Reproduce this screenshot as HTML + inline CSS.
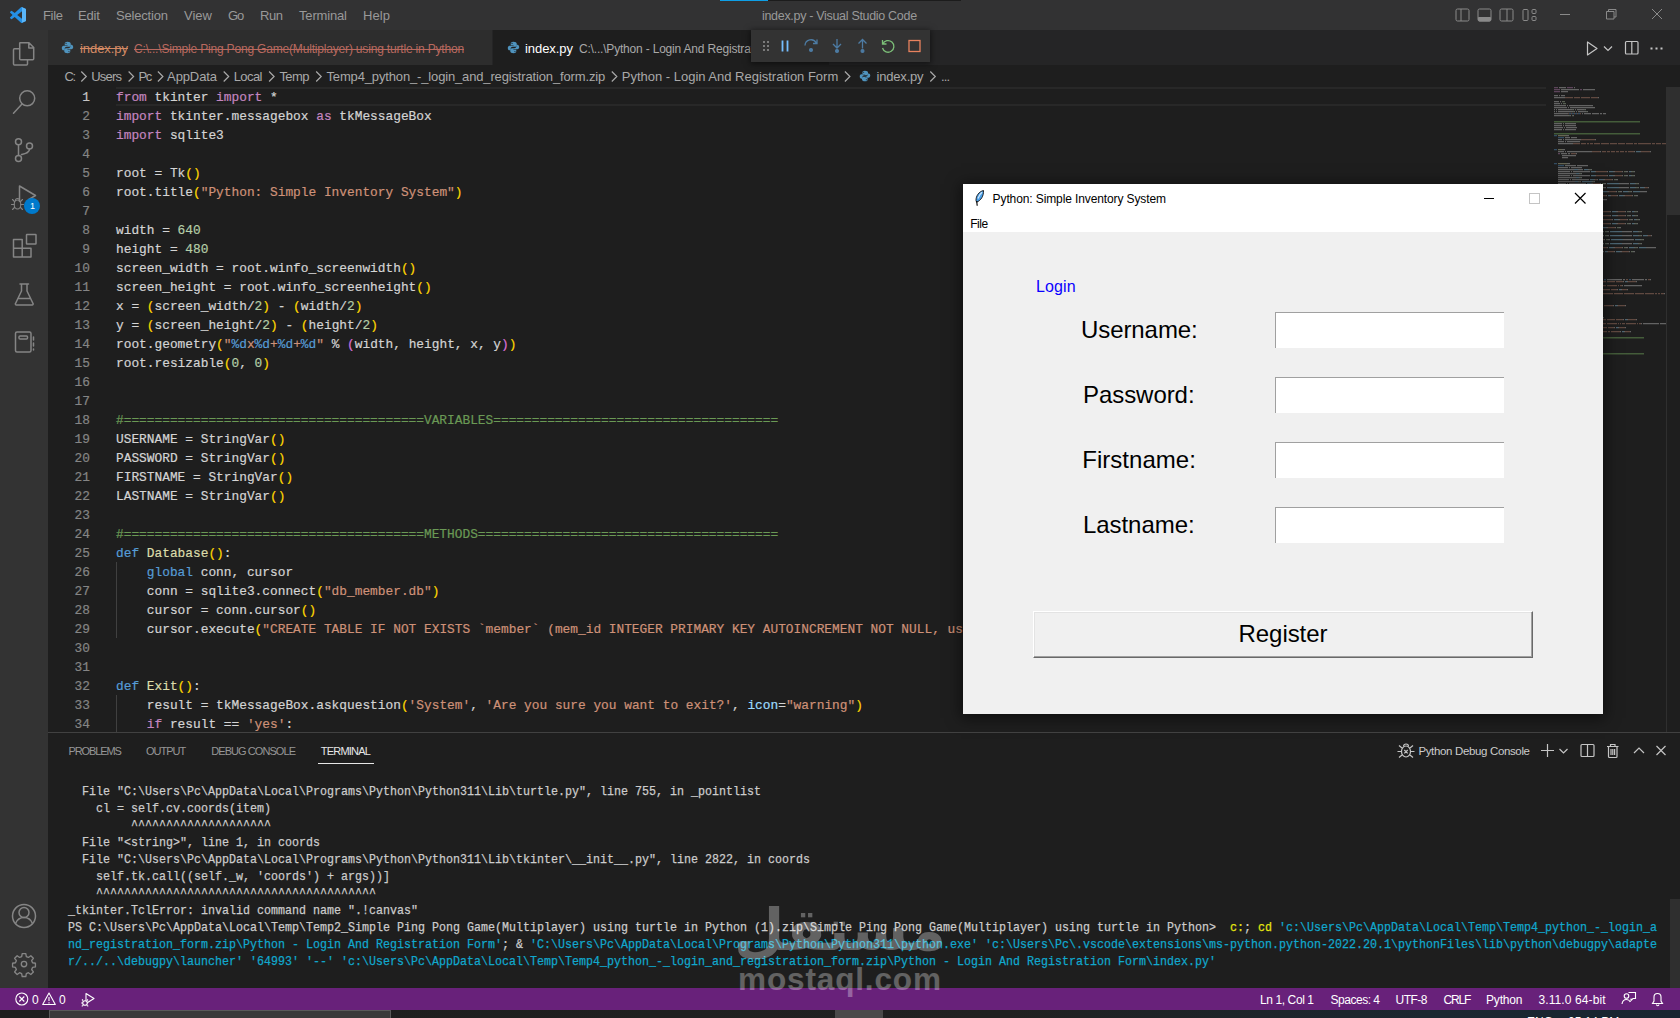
<!DOCTYPE html>
<html lang="en"><head><meta charset="utf-8"><title>index.py - Visual Studio Code</title>
<style>
html,body{margin:0;padding:0;background:#1e1e1e;overflow:hidden}
body{width:1680px;height:1018px;position:relative;font-family:"Liberation Sans",sans-serif;font-size:13px;color:#ccc}
.t,.m,.a{position:absolute}
.t,.m{white-space:pre}
.t{font-family:"Liberation Sans",sans-serif}
.m{font-family:"Liberation Mono",monospace}
i{font-style:normal}
svg{position:absolute;overflow:visible}
pre{margin:0;position:absolute;font-family:"Liberation Mono",monospace;white-space:pre;transform-origin:0 0}
.k{color:#c586c0}.b{color:#569cd6}.f{color:#dcdcaa}.s{color:#ce9178}.n{color:#b5cea8}.c{color:#6a9955}.p{color:#9cdcfe}
.y1{color:#ffd700}.y2{color:#da70d6}.y3{color:#179fff}
.cy{color:#11a8cd}.ye{color:#e5e510}
.st{text-decoration:line-through}
</style></head><body>
<div class="a" id="titlebar" style="left:0;top:0;width:1680px;height:30px;background:#323233"></div>
<div class="a" style="left:720px;top:0;width:241px;height:1px;background:#1c1c1c"><div class="a" style="left:0;top:0;width:48px;height:1px;background:#0e9fe6"></div></div>
<svg style="left:10px;top:7px" width="16" height="16" viewBox="0 0 100 100"><path d="M70.9 99.3a6.2 6.2 0 0 0 5-.2l20.6-9.9a6.25 6.25 0 0 0 3.5-5.6V16.4a6.25 6.25 0 0 0-3.5-5.6L75.9.9a6.2 6.2 0 0 0-7.1 1.2L29.4 38 12.2 25a4.2 4.2 0 0 0-5.3.2l-5.5 5a4.2 4.2 0 0 0 0 6.2L16.2 50 1.4 63.6a4.2 4.2 0 0 0 0 6.2l5.5 5a4.2 4.2 0 0 0 5.3.2l17.2-13 39.4 35.9a6.2 6.2 0 0 0 2.1 1.4zM75 27.3 45.1 50 75 72.7V27.3z" fill="#2490e6" fill-rule="evenodd"/><path d="M75.9.9 96.5 10.8a6.25 6.25 0 0 1 3.5 5.6v67.2a6.25 6.25 0 0 1-3.5 5.6l-20.6 9.9a6.2 6.2 0 0 1-5 .2c2.3.9 4.1-.8 4.1-3.3V4c0-2.500-2.300-4.200-4.600-3.300a6.200 6.200 0 0 1 5.500.2z" fill="#5ab5f8"/></svg>
<span class="t" style="left:43px;top:6.50px;font-size:13px;line-height:18px;color:#999;letter-spacing:-0.32px;">File</span>
<span class="t" style="left:78px;top:6.50px;font-size:13px;line-height:18px;color:#999;letter-spacing:-0.14px;">Edit</span>
<span class="t" style="left:116px;top:6.50px;font-size:13px;line-height:18px;color:#999;letter-spacing:-0.19px;">Selection</span>
<span class="t" style="left:184px;top:6.50px;font-size:13px;line-height:18px;color:#999;letter-spacing:0.02px;">View</span>
<span class="t" style="left:228px;top:6.50px;font-size:13px;line-height:18px;color:#999;letter-spacing:-1.20px;">Go</span>
<span class="t" style="left:260px;top:6.50px;font-size:13px;line-height:18px;color:#999;letter-spacing:-0.43px;">Run</span>
<span class="t" style="left:299px;top:6.50px;font-size:13px;line-height:18px;color:#999;letter-spacing:-0.16px;">Terminal</span>
<span class="t" style="left:363px;top:6.50px;font-size:13px;line-height:18px;color:#999;letter-spacing:0.08px;">Help</span>
<span class="t" style="left:762px;top:7.47px;font-size:12.5px;line-height:18px;color:#999;letter-spacing:-0.31px;">index.py - Visual Studio Code</span>
<svg style="left:1455px;top:8px" width="210" height="14" fill="none" stroke="#8a8a8a" stroke-width="1">
<rect x="1" y="1" width="13" height="12" rx="1.5"/><path d="M6 1v12"/>
<rect x="23" y="1" width="13" height="12" rx="1.5"/><path d="M23.500 9.500h12v2.500a1 1 0 0 1-1 1h-10a1 1 0 0 1-1-1z" fill="#8a8a8a"/>
<rect x="45" y="1" width="13" height="12" rx="1.5"/><path d="M52 1v12"/>
<rect x="68" y="1.500" width="5" height="11" rx="1"/><rect x="77" y="1.500" width="4" height="4" rx="1"/><rect x="77" y="8.500" width="4" height="4" rx="1"/>
<path d="M105 6.500h10"/>
<path d="M151.500 3.500h7.500v7.500h-7.500z M153.500 3.500v-2h7.500v7.500h-2"/>
<path d="M197 1l10 10M207 1l-10 10"/>
</svg>
<div class="a" id="activitybar" style="left:0;top:30px;width:48px;height:958px;background:#333333"></div>
<svg style="left:0;top:30px" width="48" height="340" fill="none" stroke="#858585" stroke-width="1.500" stroke-linejoin="round" stroke-linecap="round">
<path d="M19.800 12.800h9.200l4.700 4.700v11.200a1 1 0 0 1-1 1h-12a1 1 0 0 1-1-1v-15a1 1 0 0 1 .1-.9z M28.800 13v5h5"/>
<path d="M19.500 18.800h-5a1 1 0 0 0-1 1v14.200a1 1 0 0 0 1 1h12a1 1 0 0 0 1-1v-4.200"/>
<circle cx="27.200" cy="68.300" r="7.500"/><path d="M22 74l-8.500 9.200"/>
<circle cx="18.500" cy="111.700" r="3"/><circle cx="29.500" cy="116" r="3"/><circle cx="18.500" cy="128.400" r="3"/><path d="M18.500 114.700v10.700 M29.500 119c0 4-4 4.500-8 5.500"/>
<path d="M19.500 171.500v-15.500l16 9.500-7 4.200"/>
<g stroke-width="1.100"><ellipse cx="17.500" cy="174.500" rx="3.300" ry="4.500"/><path d="M14.500 171.500l-2-2M20.500 171.500l2-2M14.200 174.500h-2.700M20.800 174.500h2.700M14.500 177.500l-2 2M20.500 177.500l2 2M15.500 170.500a2 2 0 0 1 4 0"/></g>
<path d="M13.500 209.500h8.700v8.700h8.800v8.800h-17.500zM22.200 218.200v8.800M13.500 218.200h8.700"/><rect x="26.500" y="204.500" width="9.500" height="9.500" rx=".5"/>
<path d="M20 254h8.500M21.500 254v7l-6 12.500a1 1 0 0 0 1 1.500h15.500a1 1 0 0 0 1-1.500l-6-12.500v-7M18 268.500h12.500"/>
<rect x="15.500" y="302" width="15.500" height="20" rx="1.500"/><rect x="19" y="306" width="8.500" height="3" rx="1"/><path d="M33.500 307v3M33.500 313v3M33.500 319v1"/>
</svg>
<div class="a" style="left:24px;top:198px;width:16px;height:16px;border-radius:8px;background:#007acc"></div>
<span class="t" style="left:30px;top:200.38px;font-size:9px;line-height:13px;color:#fff;">1</span>
<svg style="left:0;top:892px" width="48" height="96" fill="none" stroke="#858585" stroke-width="1.500">
<circle cx="24" cy="24" r="11.500"/><circle cx="24" cy="20.500" r="5"/><path d="M15.500 31.500c2-5 5-6 8.500-6s6.500 1 8.500 6"/>
<g transform="translate(24 72) scale(.9) translate(-24 -72)"><circle cx="24" cy="72" r="3"/>
<path d="M22 60.500h4l.6 3.200 2.300 1 2.700-1.900 2.800 2.800-1.900 2.700 1 2.300 3.200.6v4l-3.200.6-1 2.300 1.900 2.700-2.800 2.800-2.700-1.900-2.300 1-.6 3.200h-4l-.6-3.200-2.300-1-2.700 1.900-2.800-2.800 1.900-2.700-1-2.300-3.200-.6v-4l3.200-.6 1-2.300-1.900-2.700 2.800-2.800 2.700 1.900 2.300-1z" stroke-linejoin="round"/></g>
</svg>
<div class="a" id="tabs" style="left:48px;top:30px;width:1632px;height:35px;background:#252526"></div>
<div class="a" style="left:48px;top:30px;width:444px;height:35px;background:#2d2d2d"></div>
<div class="a" style="left:493px;top:30px;width:336px;height:35px;background:#1e1e1e"></div>
<svg style="left:61px;top:41px" width="13" height="13" viewBox="0 0 16 16" fill="#4f93bd"><path d="M7.900 1C5 1 4.600 2.300 4.600 3.400v1.800h3.500v.6H3.200C1.800 5.800 1 7 1 8.600c0 1.700.8 2.900 2.200 2.900h1.300V9.600c0-1.400 1.200-2.500 2.500-2.500h3c1.100 0 2-.9 2-2V3.400C12 2 10.600 1 7.900 1zM6.200 2.300a.7.7 0 1 1 0 1.400.7.7 0 0 1 0-1.400z"/><path d="M8.100 15c2.900 0 3.300-1.300 3.300-2.400v-1.800H7.900v-.6h4.900c1.400 0 2.200-1.200 2.200-2.800 0-1.700-.8-2.900-2.200-2.900h-1.300v1.900c0 1.400-1.200 2.500-2.500 2.500h-3c-1.100 0-2 .9-2 2v1.700C4 14 5.400 15 8.100 15zm1.700-1.300a.7.7 0 1 1 0-1.400.7.7 0 0 1 0 1.400z"/></svg>
<span class="t" style="left:80px;top:39.50px;font-size:13px;line-height:18px;color:#d48a64;letter-spacing:-0.06px;text-decoration:line-through;">index.py</span>
<span class="t" style="left:134px;top:41.14px;font-size:12px;line-height:17px;color:#b9695f;letter-spacing:-0.18px;text-decoration:line-through;">C:\...\Simple Ping Pong Game(Multiplayer) using turtle in Python</span>
<svg style="left:507px;top:41px" width="13" height="13" viewBox="0 0 16 16" fill="#4f93bd"><path d="M7.900 1C5 1 4.600 2.300 4.600 3.400v1.800h3.500v.6H3.200C1.800 5.800 1 7 1 8.600c0 1.700.8 2.900 2.200 2.900h1.300V9.600c0-1.400 1.200-2.500 2.500-2.500h3c1.100 0 2-.9 2-2V3.400C12 2 10.600 1 7.900 1zM6.200 2.300a.7.7 0 1 1 0 1.400.7.7 0 0 1 0-1.400z"/><path d="M8.100 15c2.900 0 3.300-1.300 3.300-2.400v-1.800H7.900v-.6h4.900c1.400 0 2.200-1.200 2.200-2.800 0-1.700-.8-2.900-2.200-2.900h-1.300v1.900c0 1.400-1.200 2.500-2.500 2.500h-3c-1.100 0-2 .9-2 2v1.700C4 14 5.400 15 8.100 15zm1.700-1.300a.7.7 0 1 1 0-1.400.7.7 0 0 1 0 1.400z"/></svg>
<span class="t" style="left:525px;top:39.50px;font-size:13px;line-height:18px;color:#ffffff;letter-spacing:-0.06px;">index.py</span>
<span class="t" style="left:579px;top:41.14px;font-size:12px;line-height:17px;color:#a8a8a8;letter-spacing:-0.19px;">C:\...\Python - Login And Registration Form</span>
<div class="a" id="dbg" style="left:751px;top:30px;width:179px;height:32px;background:#333333;box-shadow:0 1px 6px 1px rgba(0,0,0,.5)"></div>
<svg style="left:751px;top:30px" width="179" height="32" fill="none" stroke-width="1.500">
<g fill="#7b7b7b"><rect x="12" y="11" width="2" height="2"/><rect x="16" y="11" width="2" height="2"/><rect x="12" y="15" width="2" height="2"/><rect x="16" y="15" width="2" height="2"/><rect x="12" y="19" width="2" height="2"/><rect x="16" y="19" width="2" height="2"/></g>
<path d="M31.500 10.500v11M36.500 10.500v11" stroke="#75beff" stroke-width="1.800"/>
<g stroke="#4d7ba3" stroke-width="1.300"><path d="M54 15.500a6 6 0 0 1 11.300-2.500M66 9.500v4h-4"/><circle cx="60" cy="20" r="1.400" fill="#4d7ba3"/>
<path d="M86 9v9M82 14l4 4 4-4"/><circle cx="86" cy="21" r="1.400" fill="#4d7ba3"/>
<path d="M111.500 18.500v-9M107.500 13.500l4-4 4 4"/><circle cx="111.500" cy="21" r="1.400" fill="#4d7ba3"/></g>
<path d="M131.500 10v4h4M131.800 14a5.800 5.800 0 1 1-.3 4" stroke="#7cbf78" stroke-width="1.300"/>
<rect x="158" y="10.500" width="11" height="11" stroke="#e8825e" stroke-width="1.300"/>
</svg>
<svg style="left:1580px;top:36px" width="90" height="24" fill="none" stroke="#c5c5c5" stroke-width="1.200">
<path d="M7.500 6v13l9.500-6.500z" stroke-linejoin="round"/><path d="M24 10.500l4 4 4-4"/>
<rect x="45.500" y="5.500" width="12.500" height="12.500" rx="1"/><path d="M51.800 5.500v12.500"/>
<g fill="#c5c5c5" stroke="none"><rect x="70.500" y="11.500" width="2" height="2"/><rect x="75.500" y="11.500" width="2" height="2"/><rect x="80.500" y="11.500" width="2" height="2"/></g>
</svg>
<span class="t" style="left:64.4px;top:67.90px;font-size:13px;line-height:18px;color:#a9a9a9;letter-spacing:-1.20px;">C:</span>
<span class="t" style="left:91.3px;top:67.90px;font-size:13px;line-height:18px;color:#a9a9a9;letter-spacing:-0.84px;">Users</span>
<span class="t" style="left:138.4px;top:67.90px;font-size:13px;line-height:18px;color:#a9a9a9;letter-spacing:-1.20px;">Pc</span>
<span class="t" style="left:167.1px;top:67.90px;font-size:13px;line-height:18px;color:#a9a9a9;letter-spacing:-0.12px;">AppData</span>
<span class="t" style="left:233.7px;top:67.90px;font-size:13px;line-height:18px;color:#a9a9a9;letter-spacing:-0.59px;">Local</span>
<span class="t" style="left:279.4px;top:67.90px;font-size:13px;line-height:18px;color:#a9a9a9;letter-spacing:-0.57px;">Temp</span>
<span class="t" style="left:326.5px;top:67.90px;font-size:13px;line-height:18px;color:#a9a9a9;letter-spacing:-0.15px;">Temp4_python_-_login_and_registration_form.zip</span>
<span class="t" style="left:621.8px;top:67.90px;font-size:13px;line-height:18px;color:#a9a9a9;letter-spacing:-0.01px;">Python - Login And Registration Form</span>
<span class="t" style="left:876.5px;top:67.90px;font-size:13px;line-height:18px;color:#a9a9a9;letter-spacing:-0.19px;">index.py</span>
<span class="t" style="left:941px;top:67.90px;font-size:13px;line-height:18px;color:#a9a9a9;letter-spacing:-0.92px;">...</span>
<svg style="left:0;top:0" width="1000" height="90" fill="none" stroke="#a9a9a9" stroke-width="1.200"><path d="M81.3 71.500l5 5-5 5 M128.6 71.500l5 5-5 5 M157.9 71.500l5 5-5 5 M223.7 71.500l5 5-5 5 M269.1 71.500l5 5-5 5 M316.2 71.500l5 5-5 5 M611.8 71.500l5 5-5 5 M844.9 71.500l5 5-5 5 M930.3 71.500l5 5-5 5"/></svg>
<svg style="left:859px;top:70px" width="12" height="12" viewBox="0 0 16 16" fill="#4f93bd"><path d="M7.900 1C5 1 4.600 2.300 4.600 3.400v1.800h3.500v.6H3.200C1.800 5.800 1 7 1 8.600c0 1.700.8 2.900 2.200 2.900h1.300V9.600c0-1.400 1.200-2.500 2.500-2.500h3c1.100 0 2-.9 2-2V3.400C12 2 10.600 1 7.900 1zM6.200 2.300a.7.7 0 1 1 0 1.400.7.7 0 0 1 0-1.400z"/><path d="M8.100 15c2.900 0 3.300-1.300 3.300-2.400v-1.800H7.900v-.6h4.900c1.400 0 2.200-1.200 2.200-2.800 0-1.700-.8-2.900-2.200-2.900h-1.300v1.900c0 1.400-1.200 2.500-2.500 2.500h-3c-1.100 0-2 .9-2 2v1.700C4 14 5.400 15 8.100 15zm1.700-1.300a.7.7 0 1 1 0-1.400.7.7 0 0 1 0 1.400z"/></svg>
<div class="a" style="left:116px;top:87px;width:1430px;height:19px;box-sizing:border-box;border-top:2px solid #282828;border-bottom:2px solid #282828"></div>
<pre style="left:48px;top:87.6px;-webkit-text-stroke:.2px;width:43.53px;text-align:right;font-size:13.3px;line-height:19px;color:#858585;transform:scaleX(0.9649)"><i style="color:#c6c6c6">1</i>
2
3
4
5
6
7
8
9
10
11
12
13
14
15
16
17
18
19
20
21
22
23
24
25
26
27
28
29
30
31
32
33
34</pre>
<pre id="code" style="left:116px;top:87.6px;-webkit-text-stroke:.2px;font-size:13.3px;line-height:19px;color:#d4d4d4;transform:scaleX(0.9649)"><i class="k">from </i>tkinter <i class="k">import </i>*
<i class="k">import </i>tkinter.messagebox <i class="k">as </i>tkMessageBox
<i class="k">import </i>sqlite3

root = Tk<i class="y1">()</i>
root.title<i class="y1">(</i><i class="s">"Python: Simple Inventory System"</i><i class="y1">)</i>

width = <i class="n">640</i>
height = <i class="n">480</i>
screen_width = root.winfo_screenwidth<i class="y1">()</i>
screen_height = root.winfo_screenheight<i class="y1">()</i>
x = <i class="y1">(</i>screen_width/<i class="n">2</i><i class="y1">) </i>- <i class="y1">(</i>width/<i class="n">2</i><i class="y1">)</i>
y = <i class="y1">(</i>screen_height/<i class="n">2</i><i class="y1">) </i>- <i class="y1">(</i>height/<i class="n">2</i><i class="y1">)</i>
root.geometry<i class="y1">(</i><i class="s">"</i><i class="b">%d</i><i class="s">x</i><i class="b">%d</i><i class="s">+</i><i class="b">%d</i><i class="s">+</i><i class="b">%d</i><i class="s">" </i>% <i class="y2">(</i>width, height, x, y<i class="y2">)</i><i class="y1">)</i>
root.resizable<i class="y1">(</i><i class="n">0</i>, <i class="n">0</i><i class="y1">)</i>


<i class="c">#=======================================VARIABLES=====================================</i>
USERNAME = StringVar<i class="y1">()</i>
PASSWORD = StringVar<i class="y1">()</i>
FIRSTNAME = StringVar<i class="y1">()</i>
LASTNAME = StringVar<i class="y1">()</i>

<i class="c">#=======================================METHODS=======================================</i>
<i class="b">def </i><i class="f">Database</i><i class="y1">()</i>:
    <i class="b">global </i>conn, cursor
    conn = sqlite3.connect<i class="y1">(</i><i class="s">"db_member.db"</i><i class="y1">)</i>
    cursor = conn.cursor<i class="y1">()</i>
    cursor.execute<i class="y1">(</i><i class="s">"CREATE TABLE IF NOT EXISTS `member` (mem_id INTEGER PRIMARY KEY AUTOINCREMENT NOT NULL, username TEXT, password TEXT, firstname TEXT, lastname TEXT)"</i><i class="y1">)</i>


<i class="b">def </i><i class="f">Exit</i><i class="y1">()</i>:
    result = tkMessageBox.askquestion<i class="y1">(</i><i class="s">'System'</i>, <i class="s">'Are you sure you want to exit?'</i>, <i class="p">icon</i>=<i class="s">"warning"</i><i class="y1">)</i>
    <i class="k">if </i>result == <i class="s">'yes'</i>:</pre>
<div class="a" style="left:116px;top:562px;width:1px;height:76px;background:#404040"></div>
<div class="a" style="left:116px;top:695px;width:1px;height:38px;background:#404040"></div>
<svg id="minimap" style="left:1554px;top:87px" width="112" height="272" stroke-width="1.200" fill="none"><path stroke="#c586c0" d="M0 0.6h4M13 0.6h6M0 2.6h6M26 2.6h2M0 4.6h6M4 66.6h2M4 192.6h2M4 196.6h4M8 200.6h2M8 204.6h4M4 230.6h2M4 234.6h4M8 238.6h2M8 242.6h4M0 268.6h2" opacity=".38"/><path stroke="#d4d4d4" d="M5 0.6h7M20 0.6h1M7 2.6h18M29 2.6h12M7 4.6h7M0 8.6h4M5 8.6h1M7 8.6h2M9 8.6h2M0 10.6h10M10 10.6h1M44 10.6h1M0 14.6h5M6 14.6h1M0 16.6h6M7 16.6h1M0 18.6h12M13 18.6h1M15 18.6h22M37 18.6h2M0 20.6h13M14 20.6h1M16 20.6h23M39 20.6h2M0 22.6h1M2 22.6h1M4 22.6h1M5 22.6h13M19 22.6h1M21 22.6h1M23 22.6h1M24 22.6h6M31 22.6h1M0 24.6h1M2 24.6h1M4 24.6h1M5 24.6h14M20 24.6h1M22 24.6h1M24 24.6h1M25 24.6h7M33 24.6h1M0 26.6h13M13 26.6h1M28 26.6h1M30 26.6h1M31 26.6h6M38 26.6h7M46 26.6h2M49 26.6h1M50 26.6h1M51 26.6h1M0 28.6h14M14 28.6h1M16 28.6h1M19 28.6h1M0 36.6h8M9 36.6h1M11 36.6h9M20 36.6h2M0 38.6h8M9 38.6h1M11 38.6h9M20 38.6h2M0 40.6h9M10 40.6h1M12 40.6h9M21 40.6h2M0 42.6h8M9 42.6h1M11 42.6h9M20 42.6h2M12 48.6h2M14 48.6h1M11 50.6h5M17 50.6h6M4 52.6h4M9 52.6h1M11 52.6h15M26 52.6h1M41 52.6h1M4 54.6h6M11 54.6h1M13 54.6h11M24 54.6h2M4 56.6h14M18 56.6h1M8 62.6h2M10 62.6h1M4 64.6h6M11 64.6h1M13 64.6h24M37 64.6h1M46 64.6h1M80 64.6h1M86 64.6h1M96 64.6h1M7 66.6h6M14 66.6h2M22 66.6h1M8 68.6h12M20 68.6h2M8 70.6h4M12 70.6h2M13 76.6h2M15 76.6h1M11 78.6h11M23 78.6h11M4 80.6h10M15 80.6h1M17 80.6h5M22 80.6h1M23 80.6h4M27 80.6h1M4 82.6h15M19 82.6h1M24 82.6h5M34 82.6h1M37 82.6h1M4 84.6h12M17 84.6h1M19 84.6h5M24 84.6h1M25 84.6h11M41 84.6h1M53 84.6h1M59 84.6h1M60 84.6h1M68 84.6h1M72 84.6h1M73 84.6h1M77 84.6h1M80 84.6h1M4 86.6h17M21 86.6h1M25 86.6h1M27 86.6h1M4 88.6h12M17 88.6h1M19 88.6h5M24 88.6h1M25 88.6h11M41 88.6h1M53 88.6h1M59 88.6h1M60 88.6h1M68 88.6h1M72 88.6h1M73 88.6h1M77 88.6h1M80 88.6h1M4 90.6h17M21 90.6h1M25 90.6h1M27 90.6h1M4 92.6h11M16 92.6h1M18 92.6h5M23 92.6h1M24 92.6h11M40 92.6h1M43 92.6h1M49 92.6h1M50 92.6h1M58 92.6h1M62 92.6h1M63 92.6h1M4 94.6h16M20 94.6h1M24 94.6h1M26 94.6h1M38 94.6h1M40 94.6h1M4 96.6h8M13 96.6h1M15 96.6h5M20 96.6h1M21 96.6h11M37 96.6h1M38 96.6h1M46 96.6h1M50 96.6h1M51 96.6h1M65 96.6h10M81 96.6h1M84 96.6h1M4 98.6h13M17 98.6h1M21 98.6h1M23 98.6h1M31 98.6h1M33 98.6h1M4 100.6h8M13 100.6h1M15 100.6h5M20 100.6h1M21 100.6h11M37 100.6h1M38 100.6h1M46 100.6h1M50 100.6h1M51 100.6h1M65 100.6h10M81 100.6h1M84 100.6h1M90 100.6h1M94 100.6h1M4 102.6h13M17 102.6h1M21 102.6h1M23 102.6h1M31 102.6h1M33 102.6h1M4 104.6h9M14 104.6h1M16 104.6h6M22 104.6h1M23 104.6h11M39 104.6h1M47 104.6h1M53 104.6h1M54 104.6h1M62 104.6h1M66 104.6h1M67 104.6h1M74 104.6h1M77 104.6h1M86 104.6h6M92 104.6h1M4 106.6h14M18 106.6h1M22 106.6h1M24 106.6h1M36 106.6h1M38 106.6h1M44 106.6h1M47 106.6h1M4 108.6h12M17 108.6h1M19 108.6h5M24 108.6h1M25 108.6h11M41 108.6h1M52 108.6h1M56 108.6h1M63 108.6h1M69 108.6h1M70 108.6h1M78 108.6h1M82 108.6h1M83 108.6h1M4 110.6h17M21 110.6h1M25 110.6h1M27 110.6h1M35 110.6h2M37 110.6h1M4 112.6h17M21 112.6h1M34 112.6h1M36 112.6h16M52 112.6h1M16 116.6h2M18 116.6h1M11 118.6h14M26 118.6h11M4 120.6h13M18 120.6h1M20 120.6h5M25 120.6h1M26 120.6h4M30 120.6h1M4 122.6h18M22 122.6h1M27 122.6h5M37 122.6h1M40 122.6h1M4 124.6h12M17 124.6h1M19 124.6h5M24 124.6h1M25 124.6h14M44 124.6h1M56 124.6h1M62 124.6h1M63 124.6h1M71 124.6h1M75 124.6h1M76 124.6h1M80 124.6h1M83 124.6h1M4 126.6h17M21 126.6h1M25 126.6h1M27 126.6h1M4 128.6h12M17 128.6h1M19 128.6h5M24 128.6h1M25 128.6h14M44 128.6h1M56 128.6h1M62 128.6h1M63 128.6h1M71 128.6h1M75 128.6h1M76 128.6h1M80 128.6h1M83 128.6h1M4 130.6h17M21 130.6h1M25 130.6h1M27 130.6h1M4 132.6h13M18 132.6h1M20 132.6h5M25 132.6h1M26 132.6h14M45 132.6h1M58 132.6h1M64 132.6h1M65 132.6h1M73 132.6h1M77 132.6h1M78 132.6h1M82 132.6h1M85 132.6h1M4 134.6h18M22 134.6h1M26 134.6h1M28 134.6h1M4 136.6h12M17 136.6h1M19 136.6h5M24 136.6h1M25 136.6h14M44 136.6h1M56 136.6h1M62 136.6h1M63 136.6h1M71 136.6h1M75 136.6h1M76 136.6h1M80 136.6h1M83 136.6h1M4 138.6h17M21 138.6h1M25 138.6h1M27 138.6h1M4 140.6h11M16 140.6h1M18 140.6h5M23 140.6h1M24 140.6h14M43 140.6h1M46 140.6h1M52 140.6h1M53 140.6h1M61 140.6h1M65 140.6h1M66 140.6h1M4 142.6h16M20 142.6h1M24 142.6h1M26 142.6h1M38 142.6h1M40 142.6h1M4 144.6h8M13 144.6h1M15 144.6h5M20 144.6h1M21 144.6h14M40 144.6h1M41 144.6h1M49 144.6h1M53 144.6h1M54 144.6h1M68 144.6h10M84 144.6h1M87 144.6h1M4 146.6h13M17 146.6h1M21 146.6h1M23 146.6h1M31 146.6h1M33 146.6h1M4 148.6h8M13 148.6h1M15 148.6h5M20 148.6h1M21 148.6h14M40 148.6h1M41 148.6h1M49 148.6h1M53 148.6h1M54 148.6h1M68 148.6h10M84 148.6h1M87 148.6h1M93 148.6h1M97 148.6h1M4 150.6h13M17 150.6h1M21 150.6h1M23 150.6h1M31 150.6h1M33 150.6h1M4 152.6h9M14 152.6h1M16 152.6h5M21 152.6h1M22 152.6h14M41 152.6h1M42 152.6h1M50 152.6h1M54 152.6h1M55 152.6h1M69 152.6h11M86 152.6h1M89 152.6h1M4 154.6h14M18 154.6h1M22 154.6h1M24 154.6h1M32 154.6h1M34 154.6h1M4 156.6h8M13 156.6h1M15 156.6h5M20 156.6h1M21 156.6h14M40 156.6h1M41 156.6h1M49 156.6h1M53 156.6h1M54 156.6h1M68 156.6h10M84 156.6h1M87 156.6h1M4 158.6h13M17 158.6h1M21 158.6h1M23 158.6h1M31 158.6h1M33 158.6h1M4 160.6h9M14 160.6h1M16 160.6h6M22 160.6h1M23 160.6h14M42 160.6h1M53 160.6h1M59 160.6h1M60 160.6h1M68 160.6h1M72 160.6h1M73 160.6h1M80 160.6h1M83 160.6h1M92 160.6h9M101 160.6h1M4 162.6h14M18 162.6h1M22 162.6h1M24 162.6h1M36 162.6h1M38 162.6h1M44 162.6h1M47 162.6h1M4 164.6h9M14 164.6h1M16 164.6h5M21 164.6h1M22 164.6h14M41 164.6h1M49 164.6h1M53 164.6h1M60 164.6h1M66 164.6h1M67 164.6h1M75 164.6h1M79 164.6h1M80 164.6h1M4 166.6h14M18 166.6h1M22 166.6h1M24 166.6h1M32 166.6h2M34 166.6h1M4 168.6h14M18 168.6h1M31 168.6h1M33 168.6h13M46 168.6h1M17 172.6h1M23 172.6h1M28 172.6h1M29 172.6h1M4 174.6h21M25 174.6h2M4 176.6h9M13 176.6h2M20 180.6h1M26 180.6h1M31 180.6h1M32 180.6h1M4 182.6h18M22 182.6h2M4 184.6h12M16 184.6h2M12 188.6h2M14 188.6h1M4 190.6h8M12 190.6h2M7 192.6h12M20 192.6h2M29 192.6h12M41 192.6h2M44 192.6h2M53 192.6h13M66 192.6h2M69 192.6h2M78 192.6h12M91 192.6h2M96 192.6h1M8 194.6h18M26 194.6h1M31 194.6h1M69 194.6h1M73 194.6h1M82 194.6h1M8 196.6h1M8 198.6h14M22 198.6h1M68 198.6h1M70 198.6h1M71 198.6h12M83 198.6h2M85 198.6h1M86 198.6h1M87 198.6h1M11 200.6h15M26 200.6h2M40 200.6h1M12 202.6h18M30 202.6h1M35 202.6h1M63 202.6h1M67 202.6h1M73 202.6h1M12 204.6h1M12 206.6h14M26 206.6h1M110 206.6h1M112 206.6h0M12 208.6h11M23 208.6h2M12 210.6h12M24 210.6h1M27 210.6h1M12 212.6h12M24 212.6h1M27 212.6h1M12 214.6h13M25 214.6h1M28 214.6h1M12 216.6h12M24 216.6h1M27 216.6h1M12 218.6h18M30 218.6h1M35 218.6h1M59 218.6h1M63 218.6h1M71 218.6h1M8 220.6h12M20 220.6h2M8 222.6h10M18 222.6h2M9 226.6h2M11 226.6h1M4 228.6h8M12 228.6h2M7 230.6h12M20 230.6h2M29 230.6h12M41 230.6h2M44 230.6h2M49 230.6h1M8 232.6h18M26 232.6h1M31 232.6h1M69 232.6h1M73 232.6h1M82 232.6h1M8 234.6h1M8 236.6h14M22 236.6h1M87 236.6h1M89 236.6h1M90 236.6h12M102 236.6h2M104 236.6h1M106 236.6h6M11 238.6h15M26 238.6h2M40 238.6h1M12 240.6h18M30 240.6h1M35 240.6h1M60 240.6h1M64 240.6h1M71 240.6h1M12 242.6h1M12 244.6h18M30 244.6h1M35 244.6h1M66 244.6h1M70 244.6h1M76 244.6h1M0 248.6h9M9 248.6h2M0 252.6h7M8 252.6h1M10 252.6h4M14 252.6h1M15 252.6h4M19 252.6h1M0 254.6h8M9 254.6h1M11 254.6h4M15 254.6h1M16 254.6h8M32 254.6h1M34 254.6h1M0 256.6h20M20 256.6h1M26 256.6h1M33 256.6h1M42 256.6h5M47 256.6h1M0 258.6h19M19 258.6h1M25 258.6h1M32 258.6h1M38 258.6h9M47 258.6h1M0 260.6h11M11 260.6h1M16 260.6h8M24 260.6h1M3 268.6h8M12 268.6h2M25 268.6h1M4 270.6h13M17 270.6h2" opacity=".38"/><path stroke="#ce9178" d="M11 10.6h8M20 10.6h6M27 10.6h9M37 10.6h7M14 26.6h1M17 26.6h1M20 26.6h1M23 26.6h1M26 26.6h1M27 52.6h14M19 56.6h7M27 56.6h5M33 56.6h2M36 56.6h3M40 56.6h6M47 56.6h8M56 56.6h7M64 56.6h7M72 56.6h7M80 56.6h3M84 56.6h13M98 56.6h3M102 56.6h5M108 56.6h4M38 64.6h8M48 64.6h4M53 64.6h3M57 64.6h4M62 64.6h3M66 64.6h4M71 64.6h2M74 64.6h6M87 64.6h9M17 66.6h5M42 84.6h11M61 84.6h7M42 88.6h11M61 88.6h7M41 92.6h2M51 92.6h7M39 96.6h7M39 100.6h7M91 100.6h3M40 104.6h7M55 104.6h7M42 108.6h10M57 108.6h6M71 108.6h7M22 112.6h12M45 124.6h11M64 124.6h7M45 128.6h11M64 128.6h7M46 132.6h12M66 132.6h7M45 136.6h11M64 136.6h7M44 140.6h2M54 140.6h7M42 144.6h7M42 148.6h7M94 148.6h3M43 152.6h7M42 156.6h7M43 160.6h10M61 160.6h7M42 164.6h7M54 164.6h6M68 164.6h7M19 168.6h12M23 192.6h2M47 192.6h2M72 192.6h2M94 192.6h2M32 194.6h7M40 194.6h8M49 194.6h3M53 194.6h8M62 194.6h7M74 194.6h8M23 198.6h7M31 198.6h1M33 198.6h4M38 198.6h8M47 198.6h5M53 198.6h10M64 198.6h1M66 198.6h2M36 202.6h9M46 202.6h2M49 202.6h7M57 202.6h6M68 202.6h5M27 206.6h7M35 206.6h4M40 206.6h8M49 206.6h10M60 206.6h9M70 206.6h10M81 206.6h9M91 206.6h9M101 206.6h2M104 206.6h2M107 206.6h3M25 210.6h2M25 212.6h2M26 214.6h2M25 216.6h2M36 218.6h13M50 218.6h9M64 218.6h7M23 230.6h2M47 230.6h2M32 232.6h7M40 232.6h8M49 232.6h3M53 232.6h8M62 232.6h7M74 232.6h8M23 236.6h7M31 236.6h1M33 236.6h4M38 236.6h8M47 236.6h5M53 236.6h10M64 236.6h1M66 236.6h1M68 236.6h3M72 236.6h10M83 236.6h1M85 236.6h2M36 240.6h4M41 240.6h12M54 240.6h6M65 240.6h6M36 244.6h8M45 244.6h8M54 244.6h2M57 244.6h9M71 244.6h5M27 256.6h6M26 258.6h6M15 268.6h10" opacity=".38"/><path stroke="#b5cea8" d="M8 14.6h3M9 16.6h3M18 22.6h1M30 22.6h1M19 24.6h1M32 24.6h1M15 28.6h1M18 28.6h1M35 82.6h2M70 84.6h2M78 84.6h2M26 86.6h1M70 88.6h2M78 88.6h2M26 90.6h1M60 92.6h2M25 94.6h1M39 94.6h1M48 96.6h2M82 96.6h2M22 98.6h1M32 98.6h1M48 100.6h2M82 100.6h2M22 102.6h1M32 102.6h1M64 104.6h2M75 104.6h2M23 106.6h1M37 106.6h1M45 106.6h2M80 108.6h2M26 110.6h1M38 122.6h2M73 124.6h2M81 124.6h2M26 126.6h1M73 128.6h2M81 128.6h2M26 130.6h1M75 132.6h2M83 132.6h2M27 134.6h1M73 136.6h2M81 136.6h2M26 138.6h1M63 140.6h2M25 142.6h1M39 142.6h1M51 144.6h2M85 144.6h2M22 146.6h1M32 146.6h1M51 148.6h2M85 148.6h2M22 150.6h1M32 150.6h1M52 152.6h2M87 152.6h2M23 154.6h1M33 154.6h1M51 156.6h2M85 156.6h2M22 158.6h1M32 158.6h1M70 160.6h2M81 160.6h2M23 162.6h1M37 162.6h1M45 162.6h2M77 164.6h2M23 166.6h1M33 254.6h1" opacity=".38"/><path stroke="#569cd6" d="M15 26.6h2M18 26.6h2M21 26.6h2M24 26.6h2M0 48.6h3M4 50.6h6M0 62.6h3M0 76.6h3M4 78.6h6M0 116.6h3M4 118.6h6M0 172.6h3M24 172.6h4M0 180.6h3M27 180.6h4M0 188.6h3M26 192.6h2M50 192.6h2M75 192.6h2M29 200.6h2M32 200.6h3M36 200.6h4M0 226.6h3M26 230.6h2M29 238.6h2M32 238.6h3M36 238.6h4" opacity=".38"/><path stroke="#6a9955" d="M0 34.8h86M0 46.8h86M0 250.8h48M49 250.8h41M0 266.8h90" stroke-width="1.6" opacity=".5"/><path stroke="#dcdcaa" d="M4 48.6h8M4 62.6h4M4 76.6h9M4 116.6h12M4 172.6h13M4 180.6h16M4 188.6h8M4 226.6h5" opacity=".38"/><path stroke="#9cdcfe" d="M82 64.6h4M20 82.6h4M30 82.6h4M37 84.6h4M55 84.6h4M75 84.6h2M22 86.6h3M37 88.6h4M55 88.6h4M75 88.6h2M22 90.6h3M36 92.6h4M45 92.6h4M21 94.6h3M28 94.6h10M33 96.6h4M53 96.6h12M76 96.6h5M18 98.6h3M25 98.6h6M33 100.6h4M53 100.6h12M76 100.6h5M86 100.6h4M18 102.6h3M25 102.6h6M35 104.6h4M49 104.6h4M69 104.6h5M79 104.6h7M19 106.6h3M26 106.6h10M40 106.6h4M37 108.6h4M54 108.6h2M65 108.6h4M22 110.6h3M29 110.6h6M23 122.6h4M33 122.6h4M40 124.6h4M58 124.6h4M78 124.6h2M22 126.6h3M40 128.6h4M58 128.6h4M78 128.6h2M22 130.6h3M41 132.6h4M60 132.6h4M80 132.6h2M23 134.6h3M40 136.6h4M58 136.6h4M78 136.6h2M22 138.6h3M39 140.6h4M48 140.6h4M21 142.6h3M28 142.6h10M36 144.6h4M56 144.6h12M79 144.6h5M18 146.6h3M25 146.6h6M36 148.6h4M56 148.6h12M79 148.6h5M89 148.6h4M18 150.6h3M25 150.6h6M37 152.6h4M57 152.6h12M81 152.6h5M19 154.6h3M26 154.6h6M36 156.6h4M56 156.6h12M79 156.6h5M18 158.6h3M25 158.6h6M38 160.6h4M55 160.6h4M75 160.6h5M85 160.6h7M19 162.6h3M26 162.6h10M40 162.6h4M37 164.6h4M51 164.6h2M62 164.6h4M19 166.6h3M26 166.6h6M18 172.6h5M21 180.6h5M27 194.6h4M71 194.6h2M31 202.6h4M65 202.6h2M31 218.6h4M61 218.6h2M27 232.6h4M71 232.6h2M31 240.6h4M62 240.6h2M31 244.6h4M68 244.6h2M25 254.6h7M21 256.6h5M35 256.6h7M20 258.6h5M34 258.6h4M12 260.6h4" opacity=".38"/></svg>
<div class="a" style="left:1666px;top:87px;width:14px;height:646px;border-left:1px solid #2f2f2f;box-sizing:border-box"></div>
<div class="a" style="left:1667px;top:87px;width:13px;height:128px;background:#2f2f2f"></div>
<div class="a" id="tk" style="left:963px;top:184px;width:640px;height:530px;background:#f0f0f0;box-shadow:0 2px 14px 2px rgba(0,0,0,.55)"><div class="a" style="left:0;top:0;width:640px;height:48px;background:#fff"></div></div>
<svg style="left:973px;top:189px" width="12" height="18"><path d="M10.500 1.500C6 2.500 2.800 7 3 11.500L3.600 13.200C8 11.500 10.800 7 10.500 1.500Z" fill="#4a9fe8" stroke="#111" stroke-width=".9" stroke-linejoin="round"/><path d="M5 9.500C6 6.500 7.500 4.500 9 3.300" stroke="#cfe8fc" stroke-width="1.300" fill="none"/><path d="M3.700 12l.5 4.700" stroke="#000" stroke-width="1.100"/></svg>
<span class="t" style="left:992.6px;top:191.04px;font-size:12px;line-height:17px;color:#000;letter-spacing:-0.11px;">Python: Simple Inventory System</span>
<span class="t" style="left:970.2px;top:215.84px;font-size:12px;line-height:17px;color:#000;letter-spacing:-0.48px;">File</span>
<svg style="left:1480px;top:190px" width="110" height="16" fill="none" stroke="#000" stroke-width="1"><path d="M4 8.500h10"/><rect x="49.500" y="3.500" width="10" height="10" stroke="#c4c4c4"/><path d="M95 3l10.500 10.500M105.500 3l-10.500 10.500" stroke-width="1.200"/></svg>
<span class="t" style="left:1036px;top:275.96px;font-size:16px;line-height:22px;color:#0a00ff;letter-spacing:0.11px;">Login</span>
<span class="t" style="left:1081px;top:313.28px;font-size:24px;line-height:34px;color:#000;letter-spacing:-0.08px;">Username:</span>
<div class="a" style="left:1275px;top:312.0px;width:229px;height:36px;background:#fff;box-sizing:border-box;border-top:1px solid #a0a0a0;border-left:1px solid #a0a0a0"></div>
<span class="t" style="left:1083px;top:378.28px;font-size:24px;line-height:34px;color:#000;letter-spacing:-0.06px;">Password:</span>
<div class="a" style="left:1275px;top:377.0px;width:229px;height:36px;background:#fff;box-sizing:border-box;border-top:1px solid #a0a0a0;border-left:1px solid #a0a0a0"></div>
<span class="t" style="left:1082.3px;top:443.28px;font-size:24px;line-height:34px;color:#000;letter-spacing:0.02px;">Firstname:</span>
<div class="a" style="left:1275px;top:442.0px;width:229px;height:36px;background:#fff;box-sizing:border-box;border-top:1px solid #a0a0a0;border-left:1px solid #a0a0a0"></div>
<span class="t" style="left:1083px;top:508.28px;font-size:24px;line-height:34px;color:#000;letter-spacing:-0.06px;">Lastname:</span>
<div class="a" style="left:1275px;top:507.0px;width:229px;height:36px;background:#fff;box-sizing:border-box;border-top:1px solid #a0a0a0;border-left:1px solid #a0a0a0"></div>
<div class="a" style="left:1033px;top:611px;width:500px;height:47px;background:#f0f0f0;box-sizing:border-box;border-top:1px solid #fff;border-left:1px solid #fff;border-right:1px solid #696969;border-bottom:1px solid #696969;box-shadow:inset -1px -1px 0 #a0a0a0,inset 1px 1px 0 #e3e3e3"></div>
<span class="t" style="left:1238.5px;top:617.18px;font-size:24px;line-height:34px;color:#000;letter-spacing:-0.05px;">Register</span>
<div class="a" style="left:48px;top:732px;width:1632px;height:1px;background:#414141"></div>
<span class="t" style="left:68.4px;top:743.69px;font-size:11px;line-height:15px;color:#969696;letter-spacing:-1.09px;">PROBLEMS</span>
<span class="t" style="left:146px;top:743.69px;font-size:11px;line-height:15px;color:#969696;letter-spacing:-1.01px;">OUTPUT</span>
<span class="t" style="left:211.3px;top:743.69px;font-size:11px;line-height:15px;color:#969696;letter-spacing:-0.94px;">DEBUG CONSOLE</span>
<span class="t" style="left:320.8px;top:743.69px;font-size:11px;line-height:15px;color:#e7e7e7;letter-spacing:-0.78px;">TERMINAL</span>
<div class="a" style="left:318px;top:763px;width:56px;height:1px;background:#e7e7e7"></div>
<span class="t" style="left:1418.4px;top:743.02px;font-size:11.5px;line-height:16px;color:#ccc;letter-spacing:-0.35px;">Python Debug Console</span>
<svg style="left:1395px;top:740px" width="280" height="22" fill="none" stroke="#c5c5c5" stroke-width="1.200">
<ellipse cx="11" cy="11.500" rx="4.500" ry="5.500"/><path d="M7 8l-3-2.500M15 8l3-2.500M6.500 11.500h-4M15.500 11.500h4M7 15l-3 2.500M15 15l3 2.500M8.500 6.500a2.500 2.500 0 0 1 5 0M9.300 10l3.400 3.400M12.700 10l-3.400 3.400"/>
<path d="M152.500 4v13M146 10.500h13"/><path d="M164.500 9l4 4 4-4"/>
<rect x="186" y="4.500" width="13" height="12" rx="1"/><path d="M192.500 4.500v12"/>
<path d="M212 6.500h11.500M215.500 6.500v-2h4.500v2M213.500 6.500v10a1 1 0 0 0 1 1h6.500a1 1 0 0 0 1-1v-10M216 9v6M217.800 9v6M219.600 9v6"/>
<path d="M239 13l5-5 5 5"/>
<path d="M261.500 6l9 9M270.500 6l-9 9"/>
</svg>
<pre id="term" style="left:68px;top:783px;-webkit-text-stroke:.25px;font-size:13.3px;line-height:17px;color:#cccccc;transform:scaleX(0.8772)">  File "C:\Users\Pc\AppData\Local\Programs\Python\Python311\Lib\turtle.py", line 755, in _pointlist
    cl = self.cv.coords(item)
         ^^^^^^^^^^^^^^^^^^^^
  File "&lt;string&gt;", line 1, in coords
  File "C:\Users\Pc\AppData\Local\Programs\Python\Python311\Lib\tkinter\__init__.py", line 2822, in coords
    self.tk.call((self._w, 'coords') + args))]
    ^^^^^^^^^^^^^^^^^^^^^^^^^^^^^^^^^^^^^^^^
_tkinter.TclError: invalid command name ".!canvas"
PS C:\Users\Pc\AppData\Local\Temp\Temp2_Simple Ping Pong Game(Multiplayer) using turtle in Python (1).zip\Simple Ping Pong Game(Multiplayer) using turtle in Python&gt;  <i class="ye">c:</i>; <i class="ye">cd</i> <i class="cy">'c:\Users\Pc\AppData\Local\Temp\Temp4_python_-_login_a</i>
<i class="cy">nd_registration_form.zip\Python - Login And Registration Form'</i>; &amp; <i class="cy">'C:\Users\Pc\AppData\Local\Programs\Python\Python311\python.exe' 'c:\Users\Pc\.vscode\extensions\ms-python.python-2022.20.1\pythonFiles\lib\python\debugpy\adapte</i>
<i class="cy">r/../..\debugpy\launcher' '64993' '--' 'c:\Users\Pc\AppData\Local\Temp\Temp4_python_-_login_and_registration_form.zip\Python - Login And Registration Form\index.py'</i></pre>
<div class="a" style="left:1670px;top:899px;width:10px;height:89px;background:#2f2f2f"></div>
<div class="a" id="status" style="left:0;top:988px;width:1680px;height:22px;background:#68217a"></div>
<svg style="left:0;top:988px" width="110" height="22" fill="none" stroke="#fff" stroke-width="1.100">
<circle cx="21.800" cy="11" r="6"/><path d="M19.300 8.500l5 5M24.300 8.500l-5 5"/>
<path d="M49 5l6.300 11.500h-12.600z" stroke-linejoin="round"/><path d="M49 9v4M49 14.300v1.200"/>
<path d="M86 5.500v10l8-5z" stroke-linejoin="round"/><circle cx="85" cy="15" r="2.300" fill="#68217a"/><path d="M83 12.500l-1-1M87 12.500l1-1M82.500 15h-1.300M82.800 17.300l-1 1M87.200 17.300l1 1"/>
</svg>
<span class="t" style="left:32px;top:991.64px;font-size:12px;line-height:17px;color:#fff;letter-spacing:-0.19px;">0</span>
<span class="t" style="left:59px;top:991.64px;font-size:12px;line-height:17px;color:#fff;letter-spacing:-0.19px;">0</span>
<span class="t" style="left:1260px;top:991.64px;font-size:12px;line-height:17px;color:#fff;letter-spacing:-0.40px;">Ln 1, Col 1</span>
<span class="t" style="left:1330.5px;top:991.64px;font-size:12px;line-height:17px;color:#fff;letter-spacing:-0.48px;">Spaces: 4</span>
<span class="t" style="left:1395.5px;top:991.64px;font-size:12px;line-height:17px;color:#fff;letter-spacing:-0.50px;">UTF-8</span>
<span class="t" style="left:1443.5px;top:991.64px;font-size:12px;line-height:17px;color:#fff;letter-spacing:-1.20px;">CRLF</span>
<span class="t" style="left:1486px;top:991.64px;font-size:12px;line-height:17px;color:#fff;letter-spacing:-0.17px;">Python</span>
<span class="t" style="left:1538.5px;top:991.64px;font-size:12px;line-height:17px;color:#fff;letter-spacing:0.10px;">3.11.0 64-bit</span>
<svg style="left:1620px;top:988px" width="50" height="22" fill="none" stroke="#fff" stroke-width="1.100">
<circle cx="6.500" cy="8" r="2.300"/><path d="M2 16c.5-3.500 2.500-4.500 4.500-4.500s3 .7 3.800 2.500M8.500 4.500h7v6h-2.500l-2 2v-2"/>
<path d="M32.500 15.500h10l-1.500-2.500v-4a3.500 3.500 0 0 0-7 0v4zM36.500 16.500a1.200 1.200 0 0 0 2.400 0"/>
</svg>
<div class="a" id="taskbar" style="left:0;top:1010px;width:1680px;height:8px;overflow:hidden;background:linear-gradient(90deg,#1e1e1e 0,#202121 60%,#1b2730 85%,#182530 100%)"><div class="a" style="left:49px;top:0;width:342px;height:12px;background:#3a3a3a;border:1px solid #5a5a5a;box-sizing:border-box"></div><div class="a" style="left:835px;top:0;width:48px;height:8px;background:#4a4a4a"></div><span class="t" style="left:1527px;top:5px;font-size:12px;line-height:14px;color:#fff">ENG</span><span class="t" style="left:1568px;top:5px;font-size:12px;line-height:14px;color:#fff">05:14 PM</span></div>
<div class="a" id="wm" style="left:0;top:0;width:1680px;height:1018px;pointer-events:none;opacity:.3">
<span class="t" style="left:738px;top:957.09px;font-size:31.5px;line-height:44px;color:#fff;font-weight:700;letter-spacing:0.87px;">mostaql.com</span>
<span class="t" dir="rtl" style="left:740px;top:884.5px;width:206px;font-family:'DejaVu Sans',sans-serif;font-weight:700;font-size:58px;line-height:90px;color:#fff;text-align:center">مستقل</span>
</div>
</body></html>
